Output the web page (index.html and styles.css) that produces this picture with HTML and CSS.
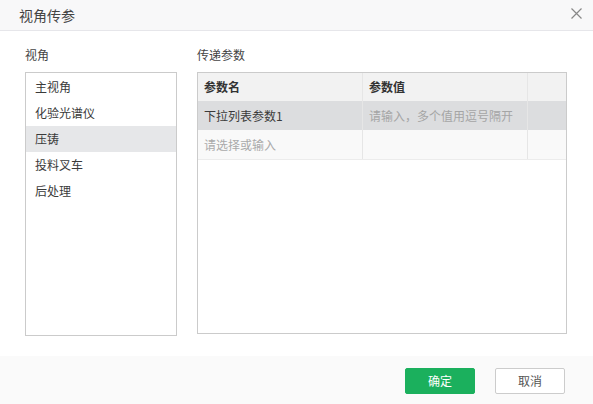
FILE: index.html
```html
<!DOCTYPE html>
<html lang="zh">
<head>
    <meta charset="UTF-8">
    <title>视角传参</title>
    <link rel="stylesheet" href="styles.css">
</head>
<body>
    <div class="dialog">
        <!--标题-->
        <div class="head">
            <span class="title">视角传参</span>
            <span class="close">
                <svg width="11" height="11" viewBox="0 0 11 11"><path d="M0.5 0.5L10.5 10.5M10.5 0.5L0.5 10.5" stroke="#888" stroke-width="1.2"/></svg>
            </span>
        </div>
        <!--内容-->
        <div class="body">
            <div class="side">
                <div class="label">视角</div>
                <ul class="list">
                    <li>主视角</li>
                    <li>化验光谱仪</li>
                    <li class="active">压铸</li>
                    <li>投料叉车</li>
                    <li>后处理</li>
                </ul>
            </div>
            <div class="main">
                <div class="label">传递参数</div>
                <div class="table">
                    <div class="row th">
                        <div class="c1">参数名</div>
                        <div class="c2">参数值</div>
                        <div class="c3"></div>
                    </div>
                    <div class="row sel">
                        <div class="c1">下拉列表参数1</div>
                        <div class="c2 ph">请输入，多个值用逗号隔开</div>
                        <div class="c3"></div>
                    </div>
                    <div class="row add">
                        <div class="c1 ph">请选择或输入</div>
                        <div class="c2"></div>
                        <div class="c3"></div>
                    </div>
                </div>
            </div>
        </div>
        <!--按钮-->
        <div class="foot">
            <span class="btn ok">确定</span>
            <span class="btn cancel">取消</span>
        </div>
    </div>
</body>
</html>
```

FILE: styles.css
```css
*{
    padding: 0;
    margin: 0;
    box-sizing: border-box;
}
body{
    font-family: "Noto Sans CJK SC", "Liberation Sans", sans-serif;
    font-size: 12px;
    color: #3a3a3a;
    background: #fff;
}
.dialog{
    width: 593px;
    height: 404px;
    display: flex;
    flex-direction: column;
}
.head{
    height: 31px;
    display: flex;
    align-items: center;
    justify-content: space-between;
    padding: 0 11px 0 19px;
    background-color: #f8f8f9;
    border-bottom: 1px solid #e6e6ea;
}
.head .title{
    font-size: 14px;
    color: #444;
}
.head .close{
    display: flex;
    margin-top: -3px;
}
.body{
    flex: 1;
    display: flex;
    padding: 13px 26px 0 25px;
}
.label{
    height: 28px;
    line-height: 22px;
    color: #444;
}
.side{
    width: 152px;
}
.list{
    list-style: none;
    height: 264px;
    border: 1px solid #cbcbcb;
    padding-top: 1px;
}
.list li{
    height: 26px;
    line-height: 26px;
    padding-left: 9px;
}
.list li.active{
    background-color: #e6e7e9;
}
.main{
    flex: 1;
    margin-left: 20px;
}
.table{
    height: 262px;
    border: 1px solid #cbcbcb;
}
.row{
    display: flex;
}
.row div{
    padding-left: 6px;
    border-right: 1px solid #e6e6e6;
}
.row .c1{
    width: 165px;
}
.row .c2{
    width: 165px;
}
.row .c3{
    flex: 1;
    border-right: none;
}
.th{
    height: 28px;
    line-height: 28px;
    background-color: #f2f2f2;
    font-weight: bold;
    color: #333;
}
.sel{
    height: 29px;
    line-height: 29px;
    background-color: #dcdddf;
}
.add{
    height: 30px;
    line-height: 30px;
    background-color: #f9f9f9;
    border-bottom: 1px solid #ececec;
}
.ph{
    color: #aaa;
}
.sel .c2.ph{
    color: #a5a5a5;
}
.foot{
    height: 48px;
    display: flex;
    justify-content: flex-end;
    align-items: flex-start;
    padding: 12px 28px 0 0;
    background-color: #fafafa;
}
.btn{
    width: 70px;
    height: 26px;
    line-height: 24px;
    text-align: center;
    border-radius: 2px;
    cursor: pointer;
}
.btn.ok{
    background-color: #1bb05d;
    border: 1px solid #1bb05d;
    color: #fff;
}
.btn.cancel{
    margin-left: 20px;
    background-color: #fff;
    border: 1px solid #ccc;
    color: #555;
}
```
